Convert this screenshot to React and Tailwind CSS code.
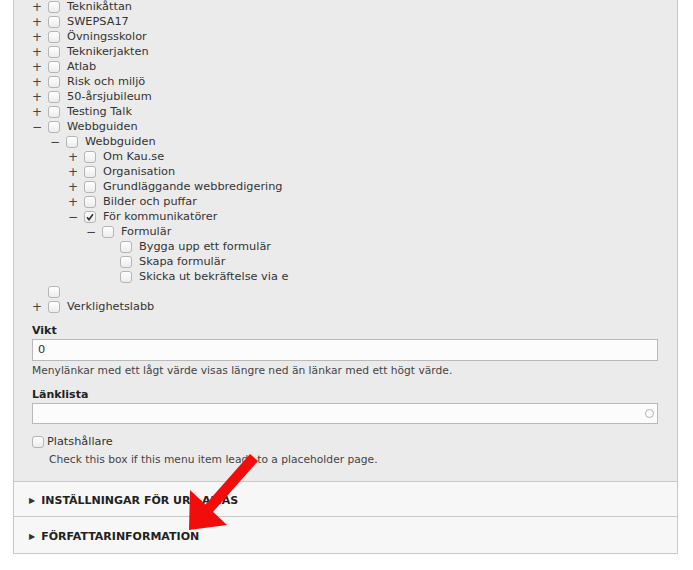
import React from "react";

const rows = [
  { level: 0, sign: "+", label: "Teknikåttan" },
  { level: 0, sign: "+", label: "SWEPSA17" },
  { level: 0, sign: "+", label: "Övningsskolor" },
  { level: 0, sign: "+", label: "Teknikerjakten" },
  { level: 0, sign: "+", label: "Atlab" },
  { level: 0, sign: "+", label: "Risk och miljö" },
  { level: 0, sign: "+", label: "50-årsjubileum" },
  { level: 0, sign: "+", label: "Testing Talk" },
  { level: 0, sign: "−", label: "Webbguiden" },
  { level: 1, sign: "−", label: "Webbguiden" },
  { level: 2, sign: "+", label: "Om Kau.se" },
  { level: 2, sign: "+", label: "Organisation" },
  { level: 2, sign: "+", label: "Grundläggande webbredigering" },
  { level: 2, sign: "+", label: "Bilder och puffar" },
  { level: 2, sign: "−", label: "För kommunikatörer", checked: true },
  { level: 3, sign: "−", label: "Formulär" },
  { level: 4, sign: "", label: "Bygga upp ett formulär" },
  { level: 4, sign: "", label: "Skapa formulär" },
  { level: 4, sign: "", label: "Skicka ut bekräftelse via e" },
  { level: 0, sign: "", label: "" },
  { level: 0, sign: "+", label: "Verklighetslabb" },
];

const pads = ["pl-[18px]", "pl-[36px]", "pl-[54px]", "pl-[72px]", "pl-[90px]"];

const Box = ({ checked }) => (
  <span className="relative inline-block h-[12px] w-[12px] shrink-0 rounded-[3px] border border-[#b5b5b5] bg-gradient-to-b from-[#ffffff] to-[#ececec]">
    {checked && (
      <svg viewBox="0 0 12 12" className="absolute left-[-1px] top-[-1px] h-[12px] w-[12px]">
        <path d="M3 6.2 L5 8.6 L9 3.2" fill="none" stroke="#333" strokeWidth="1.6" />
      </svg>
    )}
  </span>
);

const Section = ({ title, h }) => (
  <div className={`flex ${h} items-center gap-[6px] border-t border-[#c8c8c8] bg-[#f7f7f7] pl-[15px] pt-[4px] text-[11px] font-bold uppercase text-[#222]`}>
    <span className="text-[8px] text-[#333]">▶</span>
    {title}
  </div>
);

export default function App() {
  return (
    <div className="relative min-h-[570px] bg-white font-['DejaVu_Sans',sans-serif] text-[11.3px] text-[#333]">
      <div className="ml-[13px] w-[665px] border-x border-b border-[#c8c8c8] bg-[#ebebeb]">
        {/* menu tree */}
        <div className="-mt-[1px]">
          {rows.map((r, i) => (
            <div key={i} className={`flex h-[15px] items-center ${pads[r.level]}`}>
              <span className="w-[16px] shrink-0 text-[12px] leading-none text-[#444]">{r.sign}</span>
              <Box checked={r.checked} />
              <span className="ml-[7px] whitespace-nowrap leading-none">{r.label}</span>
            </div>
          ))}
        </div>
        {/* fields */}
        <div className="pl-[18px] pr-[19px]">
          <div className="mt-[9px] h-[15px] text-[11px] font-bold leading-[15px] text-[#222]">Vikt</div>
          <div className="mt-[1px] flex h-[22px] items-center border border-[#b9b9b9] bg-[#fcfcfc] px-[5px]">0</div>
          <div className="mt-[3px] h-[14px] text-[10.7px] leading-[14px] text-[#444]">Menylänkar med ett lågt värde visas längre ned än länkar med ett högt värde.</div>
          <div className="mt-[9px] h-[15px] text-[11px] font-bold leading-[15px] text-[#222]">Länklista</div>
          <div className="mt-[1px] flex h-[21px] items-center justify-end border border-[#b9b9b9] bg-[#fcfcfc] pr-[3px]">
            <span className="h-[9px] w-[9px] rounded-full border-[1.5px] border-[#b0b0b0]"></span>
          </div>
          <div className="mt-[10px] flex h-[15px] items-center gap-[3px]">
            <Box />
            <span className="leading-none">Platshållare</span>
          </div>
          <div className="mt-[4px] h-[14px] pl-[17px] text-[10.7px] leading-[14px] text-[#444]">Check this box if this menu item leads to a placeholder page.</div>
          <div className="h-[14px]"></div>
        </div>
        {/* collapsed sections */}
        <Section title="Inställningar för URL-alias" h="h-[35px]" />
        <Section title="Författarinformation" h="h-[37px]" />
      </div>
      {/* red arrow overlay */}
      <svg className="absolute left-0 top-0 h-[570px] w-[693px]" viewBox="0 0 693 570">
        <polygon points="258,462 250,455 204,507 212,514" fill="#f20d0d" />
        <polygon points="189,531 190,491 227,526" fill="#f20d0d" />
      </svg>
    </div>
  );
}
